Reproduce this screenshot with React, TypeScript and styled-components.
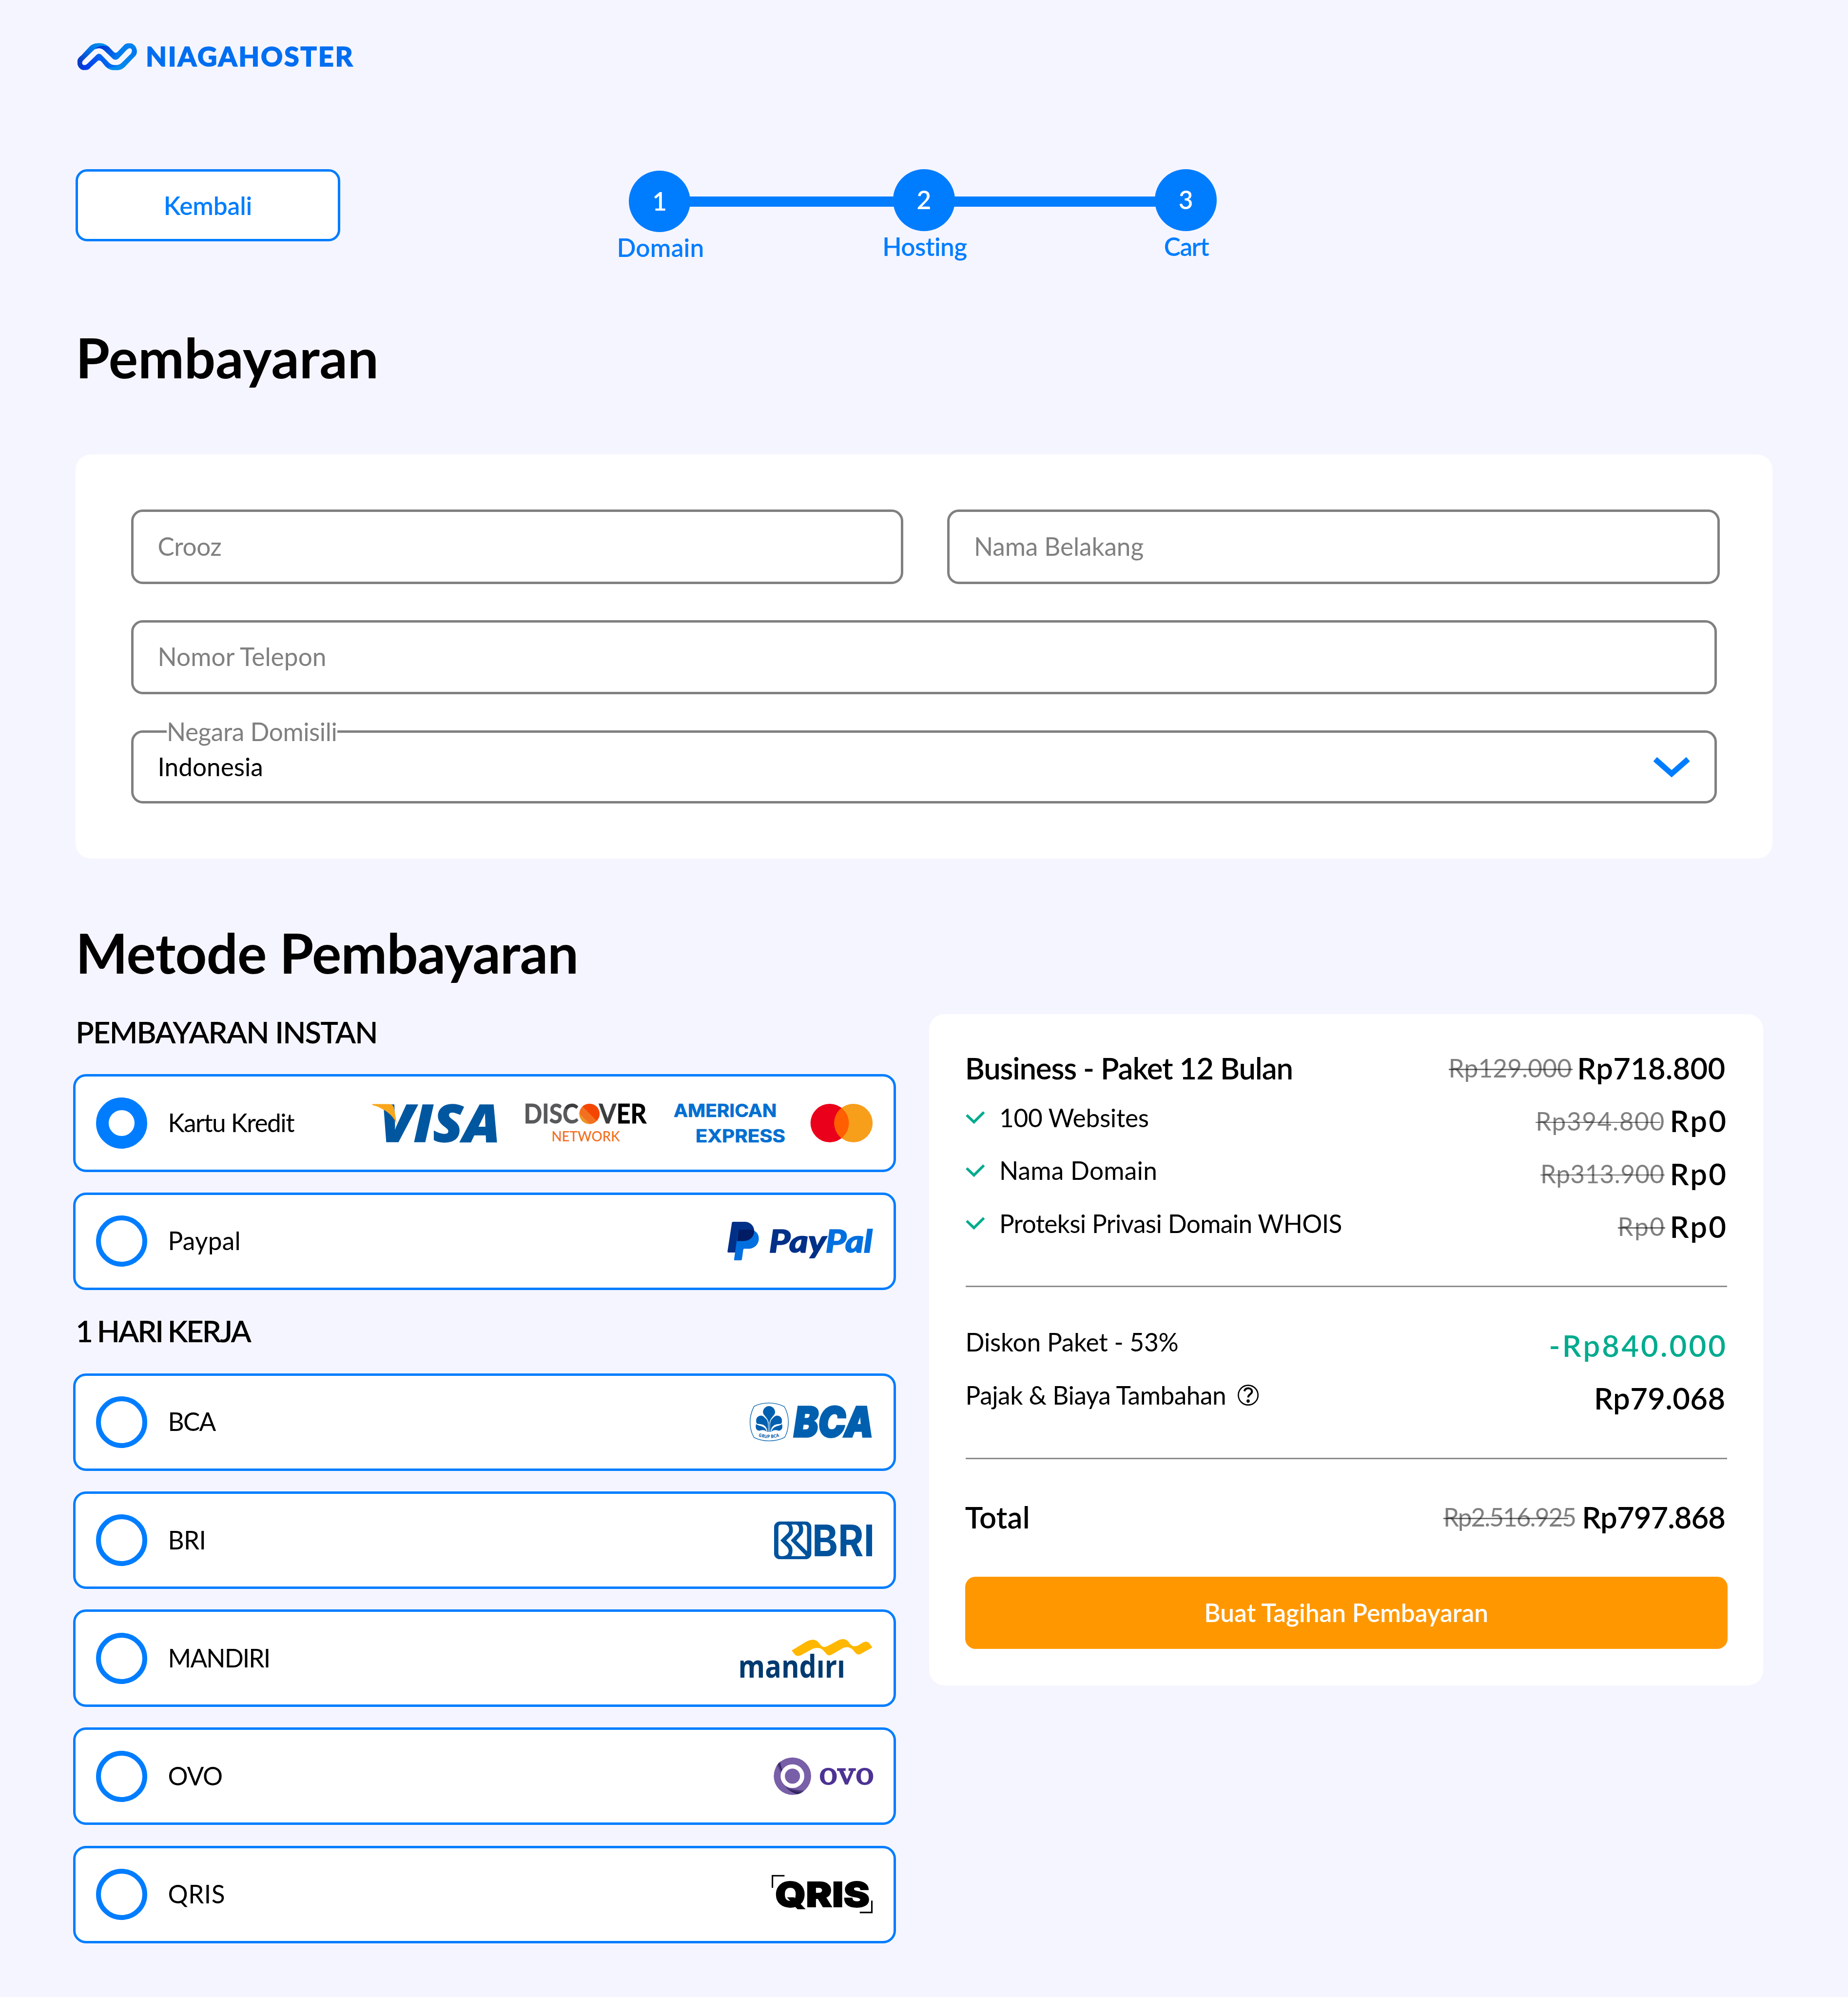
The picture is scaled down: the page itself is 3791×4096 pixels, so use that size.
import React from "react";
import styled, { createGlobalStyle } from "styled-components";

const u = (n: number) => `${+(n * 0.87755).toFixed(3)}px`;

const color = {
  page: "#f5f5ff",
  blue: "#007dff",
  grey: "#808080",
  green: "#00ab8e",
  orange: "#ff9800",
};

const GlobalStyle = createGlobalStyle`
  *, *::before, *::after { box-sizing: border-box; }
  html, body { margin: 0; padding: 0; background: ${color.page}; }
  body { font-family: Lato, "Open Sans", sans-serif; color: #000; }
  button, h1, h2, h3, ul { margin: 0; padding: 0; font: inherit; }
`;

/* ---------- type ---------- */

const Body = styled.span<{ $ls?: number; $medium?: boolean }>`
  font-size: ${u(58.5)};
  line-height: ${u(72)};
  font-weight: ${(p) => (p.$medium ? 600 : 400)};
  letter-spacing: ${(p) => u(p.$ls ?? 0)};
  margin-right: ${(p) => u(-(p.$ls ?? 0))};
  white-space: nowrap;
`;

const Strong = styled.span<{ $ls?: number; $inset?: number }>`
  font-size: ${u(70.2)};
  line-height: ${u(84)};
  font-weight: 600;
  letter-spacing: ${(p) => u(p.$ls ?? 0)};
  margin-right: ${(p) => u((p.$inset ?? 0) - (p.$ls ?? 0))};
  white-space: nowrap;
`;

const Title = styled.h1<{ $top: number; $ls: number }>`
  margin: ${(p) => u(p.$top)} 0 0 ${u(177)};
  font-size: ${u(128.7)};
  line-height: ${u(160)};
  font-weight: 700;
  letter-spacing: ${(p) => u(p.$ls)};
  white-space: nowrap;
`;

/* ---------- page frame ---------- */

const Page = styled.main`
  display: flex;
  flex-direction: column;
  width: ${u(4320)};
  height: 4096px;
  overflow: hidden;
  background: ${color.page};
`;

const Header = styled.header`
  display: flex;
  padding: ${u(97)} 0 0 ${u(177)};
`;

const Drawing = styled.svg<{ $w: number; $h: number }>`
  display: block;
  flex: none;
  width: ${(p) => u(p.$w)};
  height: ${(p) => u(p.$h)};
  overflow: visible;
`;

const Nav = styled.nav`
  display: flex;
  align-items: flex-start;
  height: ${u(240)};
  margin: ${u(229)} 0 0 ${u(177)};
`;

const BackButton = styled.button`
  display: flex;
  align-items: center;
  justify-content: center;
  width: ${u(618)};
  height: ${u(168)};
  border: ${u(6)} solid ${color.blue};
  border-radius: ${u(27)};
  background: #fff;
  color: ${color.blue};
`;

const Stepper = styled.div`
  display: flex;
  align-items: flex-start;
  margin-left: ${u(675)};
`;

const Step = styled.div<{ $drop?: boolean }>`
  display: flex;
  flex-direction: column;
  align-items: center;
  width: ${u(144)};
  padding-top: ${(p) => u(p.$drop ? 3 : 0)};
  color: ${color.blue};
`;

const StepDot = styled.div`
  display: flex;
  align-items: center;
  justify-content: center;
  width: ${u(144)};
  height: ${u(144)};
  padding-bottom: ${u(2)};
  border-radius: 50%;
  background: ${color.blue};
  color: #fff;
`;

const StepLabel = styled(Body)`
  padding-left: ${u(4)};
`;

const StepLine = styled.div<{ $w: number }>`
  width: ${(p) => u(p.$w)};
  height: ${u(24)};
  margin: ${u(63)} ${u(-2)} 0;
  background: ${color.blue};
`;

/* ---------- form ---------- */

const FormCard = styled.section`
  display: flex;
  flex-direction: column;
  gap: ${u(84)};
  width: ${u(3966)};
  height: ${u(945)};
  margin: ${u(147)} 0 0 ${u(177)};
  padding: ${u(129)} ${u(123)} 0 ${u(129)};
  border-radius: ${u(36)};
  background: #fff;
`;

const FieldRow = styled.div`
  display: flex;
  justify-content: space-between;
`;

const Field = styled.div<{ $w: number; $h?: number }>`
  position: relative;
  display: flex;
  align-items: center;
  justify-content: space-between;
  width: ${(p) => u(p.$w)};
  height: ${(p) => u(p.$h ?? 174)};
  padding: 0 ${u(57)} ${u(2)};
  border: ${u(6)} solid ${color.grey};
  border-radius: ${u(27)};
  color: ${color.grey};
`;

const FieldLegend = styled.label`
  position: absolute;
  left: ${u(78)};
  top: ${u(-39)};
  width: ${u(399)};
  height: ${u(72)};
  background: #fff;
`;

const FieldValue = styled(Body)`
  margin-top: ${u(1)};
  color: #000;
`;

/* ---------- payment methods ---------- */

const Columns = styled.div`
  display: flex;
  align-items: flex-start;
  gap: ${u(78)};
  margin: ${u(63)} 0 0 ${u(171)};
`;

const Methods = styled.div`
  display: flex;
  flex-direction: column;
  gap: ${u(54)};
  width: ${u(1923)};
`;

const MethodGroup = styled.section`
  display: flex;
  flex-direction: column;
  gap: ${u(48)};
`;

const GroupLabel = styled.h3<{ $ls: number; $ws?: number }>`
  margin: 0 0 ${u(9)} ${u(6)};
  font-size: ${u(70.2)};
  line-height: ${u(84)};
  font-weight: 600;
  letter-spacing: ${(p) => u(p.$ls)};
  word-spacing: ${(p) => u(p.$ws ?? 0)};
`;

const Method = styled.div`
  display: flex;
  align-items: center;
  height: ${u(228)};
  padding: 0 ${u(48)};
  border: ${u(6)} solid ${color.blue};
  border-radius: ${u(30)};
  background: #fff;
`;

const Radio = styled.div<{ $on?: boolean }>`
  flex: none;
  width: ${u(120)};
  height: ${u(120)};
  margin-right: ${u(48)};
  border: ${(p) => u(p.$on ? 30 : 12)} solid ${color.blue};
  border-radius: 50%;
  background: #fff;
`;

const MethodName = styled(Body)`
  padding-bottom: ${u(2)};
`;

const Brands = styled.div`
  display: flex;
  align-items: center;
  gap: ${u(63)};
  margin-left: auto;
`;

/* ---------- summary ---------- */

const Summary = styled.aside`
  width: ${u(1950)};
  height: ${u(1569)};
  padding: ${u(65)} ${u(84)} 0;
  border-radius: ${u(36)};
  background: #fff;
`;

const Line = styled.div`
  display: flex;
  align-items: center;
  justify-content: space-between;
  height: ${u(123.4)};
`;

const LineLabel = styled.div<{ $gap?: number }>`
  display: flex;
  align-items: center;
  gap: ${(p) => u(p.$gap ?? 0)};
  padding: 0 0 ${u(15)} ${u(1)};
`;

const Prices = styled.div`
  display: flex;
  align-items: center;
  gap: ${u(13)};
`;

const OldPrice = styled(Body)<{ $strike: number }>`
  position: relative;
  color: ${color.grey};

  &::after {
    content: "";
    position: absolute;
    left: 0;
    top: ${u(37.5)};
    width: ${(p) => u(p.$strike)};
    height: ${u(3)};
    background: rgba(0, 0, 0, 0.55);
  }
`;

const Divider = styled.hr<{ $top: number; $bottom: number }>`
  height: ${u(3.42)};
  margin: ${(p) => u(p.$top)} ${u(1)} ${(p) => u(p.$bottom)};
  border: 0;
  background: #8c8c8c;
`;

const PayButton = styled.button`
  display: flex;
  align-items: center;
  justify-content: center;
  width: 100%;
  height: ${u(168)};
  margin-top: ${u(78)};
  padding: 0;
  border: 0;
  border-radius: ${u(24)};
  background: ${color.orange};
  color: #fff;
`;

/* ---------- logos ---------- */

const Mark = styled.text<{ $font?: string; $weight: number; $italic?: boolean; $bold?: number }>`
  font-family: ${(p) => p.$font ?? "Lato"}, sans-serif;
  font-weight: ${(p) => p.$weight};
  font-style: ${(p) => (p.$italic ? "italic" : "normal")};
  stroke: ${(p) => (p.$bold ? p.fill ?? "#000" : "none")};
  stroke-width: ${(p) => p.$bold ?? 0};
`;

const NiagahosterLogo = () => (
  <Drawing $w={655} $h={70} viewBox="177 97 655 70">
    <defs>
      <linearGradient id="nhBase" x1="68" y1="260" x2="371" y2="120" gradientUnits="userSpaceOnUse">
        <stop offset="0" stopColor="#0030e6" />
        <stop offset=".3" stopColor="#0052f0" />
        <stop offset=".6" stopColor="#0078ee" />
        <stop offset="1" stopColor="#0084f0" />
      </linearGradient>
      <linearGradient id="nhTop" x1="80" y1="215" x2="205" y2="95" gradientUnits="userSpaceOnUse">
        <stop offset="0" stopColor="#0a3cc8" />
        <stop offset=".5" stopColor="#0074e6" />
        <stop offset="1" stopColor="#0096ec" />
      </linearGradient>
      <linearGradient id="nhMid" x1="165" y1="115" x2="262" y2="190" gradientUnits="userSpaceOnUse">
        <stop offset="0" stopColor="#002fd0" />
        <stop offset="1" stopColor="#0072ee" />
      </linearGradient>
      <linearGradient id="nhEnd" x1="240" y1="282" x2="371" y2="150" gradientUnits="userSpaceOnUse">
        <stop offset="0" stopColor="#0090ec" />
        <stop offset="1" stopColor="#0078f0" />
      </linearGradient>
      <clipPath id="nhClip">
        <path
          clipRule="evenodd"
          d="M68 228C68 205 76 192 88 180L130 118C142 100 160 93 178 93C197 93 215 102 227 118L252 154C258 163 267 163 273 154L302 112C310 98 320 93 332 93C355 93 371 120 371 150C371 170 364 182 355 193L310 258C298 275 285 282 265 282L250 282C234 281 222 270 212 258L190 222C183 212 174 212 168 222L136 262C128 276 120 282 108 282L98 282C82 278 68 255 68 228ZM92 232C92 240 97 247 104 247C110 247 114 244 120 236L162 180C172 163 184 163 194 180L231 232C238 241 248 247 262 247C278 247 286 242 295 230L333 178C338 172 342 166 344 158C348 140 345 130 335 129C330 129 324 134 318 142L279 198C270 213 254 213 245 198L206 146C199 136 190 129 178 129C166 129 156 134 148 146L103 206C97 214 92 222 92 232Z"
        />
      </clipPath>
    </defs>
    <g transform="translate(150 70) scale(.45914 .33333)">
      <g clipPath="url(#nhClip)">
        <path d="M60 85H380V290H60Z" fill="url(#nhBase)" />
        <path d="M60 290V85H235V128C205 105 170 108 150 142L92 225C88 250 92 268 104 290Z" fill="url(#nhTop)" />
        <path d="M160 130C180 108 205 108 228 118L262 165L262 212L205 150Z" fill="url(#nhMid)" />
        <path d="M224 264C250 266 270 258 285 240L345 160C350 140 345 125 335 122C355 120 368 135 375 150V290H230Z" fill="url(#nhEnd)" />
      </g>
    </g>
    <Mark $weight={900} $bold={1.6} x="341" y="155" fontSize="63.5" fill="#006ef0" textLength="484" lengthAdjust="spacing">
      NIAGAHOSTER
    </Mark>
  </Drawing>
);

const VisaLogo = () => (
  <Drawing $w={294} $h={90} viewBox="870 2580 294 90">
    <Mark $font="'Open Sans'" $weight={800} $italic $bold={1.5} x="887" y="2668.5" fontSize="121" fill="#0057a0" textLength="282" lengthAdjust="spacingAndGlyphs">
      VISA
    </Mark>
    <g transform="translate(840 2540) scale(.45914 .33333)">
      <path d="M65 122H152C165 124 173 133 175 150L190 265C180 225 150 180 120 160C105 146 85 134 65 129Z" fill="#faa61a" />
    </g>
  </Drawing>
);

const DiscoverLogo = () => (
  <Drawing $w={285} $h={90} viewBox="1227 2580 285 90">
    <defs>
      <linearGradient id="dcL" x1="0" y1="1" x2="1" y2="0">
        <stop offset=".7" stopColor="#58595b" />
        <stop offset=".7" stopColor="#3c3d3f" />
      </linearGradient>
      <linearGradient id="dcR" x1="0" y1="0" x2="1" y2="0">
        <stop offset=".42" stopColor="#3c3d3f" />
        <stop offset=".42" stopColor="#000" />
      </linearGradient>
      <linearGradient id="dcO" x1="0" y1=".8" x2=".8" y2="0">
        <stop offset=".2" stopColor="#ec9426" />
        <stop offset=".2" stopColor="#f37021" />
        <stop offset=".52" stopColor="#f37021" />
        <stop offset=".52" stopColor="#f44600" />
      </linearGradient>
    </defs>
    <Mark $weight={700} $bold={1} x="1224" y="2626" fontSize="63" fill="url(#dcL)" textLength="128" lengthAdjust="spacingAndGlyphs">
      DISC
    </Mark>
    <circle cx="1377.7" cy="2603.5" r="23.8" fill="url(#dcO)" />
    <Mark $weight={700} $bold={1} x="1400" y="2626" fontSize="63" fill="url(#dcR)" textLength="111" lengthAdjust="spacingAndGlyphs">
      VER
    </Mark>
    <Mark $weight={500} x="1289" y="2667.5" fontSize="33.5" fill="#f37021" textLength="160" lengthAdjust="spacingAndGlyphs">
      NETWORK
    </Mark>
  </Drawing>
);

const AmexLogo = () => (
  <Drawing $w={257} $h={90} viewBox="1575 2580 257 90">
    <Mark $font="Inter" $weight={700} $bold={0.8} x="1575" y="2610.3" fontSize="41.5" fill="#006fd1" textLength="241" lengthAdjust="spacingAndGlyphs">
      AMERICAN
    </Mark>
    <Mark $font="Inter" $weight={700} $bold={0.8} x="1626" y="2669.7" fontSize="41.5" fill="#006fd1" textLength="210" lengthAdjust="spacingAndGlyphs">
      EXPRESS
    </Mark>
  </Drawing>
);

const MastercardLogo = () => (
  <Drawing $w={145} $h={90} viewBox="1895 2580 145 90">
    <defs>
      <clipPath id="mcClip">
        <circle cx="1939.5" cy="2625" r="44.9" />
      </clipPath>
    </defs>
    <circle cx="1939.5" cy="2625" r="44.9" fill="#eb001b" />
    <circle cx="1995" cy="2625" r="44.9" fill="#f79e1b" />
    <circle cx="1995" cy="2625" r="44.9" fill="#ff5f00" clipPath="url(#mcClip)" />
  </Drawing>
);

const PaypalLogo = () => (
  <Drawing $w={340} $h={90} viewBox="1700 2856 340 90">
    <g transform="translate(1500 2540) scale(.39541 .33333)">
      <path transform="translate(0 0)" d="M539 948H612C643 950 665 980 665 1012C665 1050 640 1083 602 1083H563L553 1163H511Q506 1163 507 1155L533 954Q534 948 539 948Z" fill="#003087" />
      <path d="M576 1002H650Q660 1004 666 1011C682 1020 692 1042 692 1065C692 1110 662 1137 632 1137H606Q601 1137 600 1145L592 1212Q591 1218 586 1218H549Q545 1218 546 1210L570 1008Q571 1002 576 1002Z" fill="#0070e0" />
      <path d="M576 1002H650Q660 1004 665 1011C665 1050 640 1083 602 1083H563L571 1008Q572 1002 576 1002Z" fill="#001c64" />
    </g>
    <Mark $weight={900} $italic $bold={1.8} x="1797.5" y="2927.5" fontSize="74" fill="#003087" textLength="134" lengthAdjust="spacingAndGlyphs">
      Pay
    </Mark>
    <Mark $weight={900} $italic $bold={1.8} x="1929.5" y="2927.5" fontSize="74" fill="#0070e0" textLength="110" lengthAdjust="spacingAndGlyphs">
      Pal
    </Mark>
  </Drawing>
);

const BcaLogo = () => (
  <Drawing $w={288} $h={90} viewBox="1752 3279 288 90">
    <g transform="translate(1700 3240) scale(.33333)" fill="#0060af">
      <path
        d="M186 143C220 125 255 119 291 119C327 119 365 127 399 145C418 180 427 215 427 252C427 290 418 330 401 360C365 378 330 385 291 385C255 385 220 378 186 361C168 330 158 290 158 252C158 215 168 180 186 143Z"
        fill="none"
        stroke="#0060af"
        strokeWidth="4.5"
      />
      <path d="M249 184C249 160 268 141 291 141C315 141 334 160 334 184C334 206 303 218 295 255L294 322H289L288 255C281 218 249 206 249 184Z" />
      <path id="bcaPetal" d="M204 262C196 240 202 209 236 208C255 210 259 222 270 230C281 240 285 255 285 290V322H280C278 290 262 275 240 269C222 265 212 267 204 262Z" />
      <path id="bcaLeaf" d="M201 267C196 285 195 312 224 314C245 308 262 306 275 322C272 298 254 286 232 280C215 276 206 273 201 267Z" />
      <use href="#bcaPetal" transform="translate(583 0) scale(-1 1)" />
      <use href="#bcaLeaf" transform="translate(583 0) scale(-1 1)" />
      <path id="bcaArc" d="M217 354Q291 376 368 354" fill="none" />
      <Mark $font="'Open Sans'" $weight={700} fontSize="32">
        <textPath href="#bcaArc" textLength="148" lengthAdjust="spacingAndGlyphs">
          GRUP BCA
        </textPath>
      </Mark>
    </g>
    <Mark $font="Inter" $weight={900} $italic $bold={4} x="1855" y="3358.5" fontSize="97" fill="#0060af" textLength="186" lengthAdjust="spacingAndGlyphs">
      BCA
    </Mark>
  </Drawing>
);

const BriLogo = () => (
  <Drawing $w={231} $h={90} viewBox="1809 3555 231 90">
    <g transform="translate(1700 3240) scale(.33333)">
      <rect x="327" y="948" width="261" height="264" rx="40" fill="#00529c" />
      <path d="M357 990Q357 969 378 969H400C425 970 432 990 432 1005C432 1018 427 1025 420 1032L371 1080L415 1124C425 1135 429 1145 429 1155C428 1178 410 1190 385 1190H377Q357 1190 357 1170Z" fill="#fff" />
      <path d="M449 969H475C495 970 502 985 502 1003C502 1018 497 1025 490 1032L444 1080L548 1186L545 1190H447C453 1178 456 1165 456 1150C456 1130 450 1118 442 1110L412 1080L448 1044C456 1035 459 1022 459 1010C459 990 454 978 449 969Z" fill="#fff" />
      <path d="M522 969H537Q558 972 558 992V1156L483 1081L515 1046C526 1035 531 1022 531 1005C531 985 527 975 522 969Z" fill="#fff" />
    </g>
    <Mark $font="Inter" $weight={700} x="1898" y="3636.7" fontSize="101.5" fill="#00529c" textLength="146" lengthAdjust="spacingAndGlyphs">
      BRI
    </Mark>
  </Drawing>
);

const MandiriLogo = () => (
  <Drawing $w={309} $h={90} viewBox="1731 3831 309 90">
    <g transform="translate(1700 3780) scale(.33333 .48469)">
      <path
        d="M452 160L560 115C600 103 625 107 645 125C662 141 675 147 700 140L775 112C810 100 838 105 855 122C872 138 885 143 915 137L950 122C975 114 990 118 1000 128L1018 145L940 175C920 182 910 180 895 168C870 146 850 140 815 147L745 175C715 187 705 187 688 170C665 150 645 143 605 150L525 180C500 190 480 187 470 176Z"
        fill="#ffb700"
      />
    </g>
    <Mark $font="'Open Sans'" $weight={700} x="1726" y="3920.6" fontSize="73" fill="#003a70" textLength="250" lengthAdjust="spacingAndGlyphs">
      mandırı
    </Mark>
  </Drawing>
);

const OvoLogo = () => (
  <Drawing $w={232} $h={90} viewBox="1808 4107 232 90">
    <defs>
      <linearGradient id="ovoA" x1="1826" y1="4120" x2="1814" y2="4126" gradientUnits="userSpaceOnUse">
        <stop offset="0" stopColor="#785fa8" />
        <stop offset=".45" stopColor="#2f2260" />
        <stop offset="1" stopColor="#785fa8" />
      </linearGradient>
      <linearGradient id="ovoB" x1="1862" y1="4178" x2="1858" y2="4196" gradientUnits="userSpaceOnUse">
        <stop offset="0" stopColor="#785fa8" />
        <stop offset=".65" stopColor="#2a1e5a" />
        <stop offset="1" stopColor="#4a3880" />
      </linearGradient>
    </defs>
    <circle cx="1852" cy="4151.5" r="43.7" fill="#785fa8" />
    <path d="M1813 4131C1816 4125 1820 4119 1826 4116C1824 4126 1826 4134 1830 4138L1825 4152C1818 4146 1813 4140 1813 4131Z" fill="url(#ovoA)" />
    <path d="M1834 4174C1846 4182 1862 4184 1880 4185C1875 4190 1870 4192 1864 4194C1852 4190 1840 4184 1834 4174Z" fill="url(#ovoB)" />
    <circle cx="1852" cy="4151.5" r="22.7" fill="#785fa8" stroke="#fff" strokeWidth="10" />
    <Mark $font="'DejaVu Serif'" $weight={400} $bold={2.6} x="1914" y="4169.5" fontSize="69" fill="#4d3394" textLength="129" lengthAdjust="spacingAndGlyphs">
      ovo
    </Mark>
  </Drawing>
);

const QrisLogo = () => (
  <Drawing $w={236} $h={90} viewBox="1804 4383 236 90">
    <path d="M1834 4384.5H1805.8V4412.5M2010 4470.3H2038.2V4442.5" fill="none" stroke="#000" strokeWidth="3.5" />
    <Mark $font="Inter" $weight={900} $bold={2} x="1812" y="4456.8" fontSize="80.5" textLength="221" lengthAdjust="spacingAndGlyphs">
      QRIS
    </Mark>
  </Drawing>
);

/* ---------- icons ---------- */

const Chevron = () => (
  <Drawing $w={87} $h={49} viewBox="0 -1 87 49">
    <path d="M5 6L43.5 40L82 6" fill="none" stroke={color.blue} strokeWidth="13" />
  </Drawing>
);

const Check = () => (
  <Drawing $w={45} $h={30} viewBox="0 0 45 30">
    <path d="M2.3 9.3L19.3 25.6L42.7 2.4" fill="none" stroke={color.green} strokeWidth="6.2" />
  </Drawing>
);

const Help = () => (
  <Drawing $w={49} $h={49} viewBox="0 0 49 49">
    <circle cx="24.5" cy="24.5" r="23" fill="none" stroke="#000" strokeWidth="3" />
    <path d="M15.6 15.4C17 10.6 20.6 8.4 25 8.6C30 8.8 33.4 11.8 33.4 16.2C33.4 22.6 24.6 22.4 24.6 30" fill="none" stroke="#000" strokeWidth="4.6" />
    <circle cx="24.4" cy="38.4" r="3.8" />
  </Drawing>
);

/* ---------- data ---------- */

const instant = [
  { name: "Kartu Kredit", ls: -1.7, on: true, logos: [VisaLogo, DiscoverLogo, AmexLogo, MastercardLogo] },
  { name: "Paypal", ls: 0.3, logos: [PaypalLogo] },
];

const oneDay = [
  { name: "BCA", ls: -2, logos: [BcaLogo] },
  { name: "BRI", ls: -0.8, logos: [BriLogo] },
  { name: "MANDIRI", ls: -2.1, logos: [MandiriLogo] },
  { name: "OVO", ls: -1.4, logos: [OvoLogo] },
  { name: "QRIS", ls: 0.6, logos: [QrisLogo] },
];

const features = [
  { name: "100 Websites", ls: -0.3, old: "Rp394.800", oldLs: 1.8, strike: 291 },
  { name: "Nama Domain", ls: 0.3, old: "Rp313.900", oldLs: 0.4, strike: 291 },
  { name: "Proteksi Privasi Domain WHOIS", ls: -0.7, old: "Rp0", oldLs: 3, strike: 111 },
];

type MethodItem = { name: string; ls: number; on?: boolean; logos: React.ComponentType[] };

const MethodRow = ({ item }: { item: MethodItem }) => (
  <Method>
    <Radio $on={item.on} />
    <MethodName $ls={item.ls}>{item.name}</MethodName>
    <Brands>
      {item.logos.map((Logo, i) => (
        <Logo key={i} />
      ))}
    </Brands>
  </Method>
);

const DiscountPrice = styled(Strong)`
  color: ${color.green};
`;

export default function App() {
  return (
    <Page>
      <GlobalStyle />
      <Header>
        <NiagahosterLogo />
      </Header>

      <Nav>
        <BackButton>
          <Body $medium $ls={-0.2}>Kembali</Body>
        </BackButton>
        <Stepper>
          <Step $drop>
            <StepDot><Body $medium>1</Body></StepDot>
            <StepLabel $medium $ls={0.2}>Domain</StepLabel>
          </Step>
          <StepLine $w={478} />
          <Step>
            <StepDot><Body $medium>2</Body></StepDot>
            <StepLabel $medium $ls={-0.7}>Hosting</StepLabel>
          </Step>
          <StepLine $w={472} />
          <Step>
            <StepDot><Body $medium>3</Body></StepDot>
            <StepLabel $medium $ls={-1.8}>Cart</StepLabel>
          </Step>
        </Stepper>
      </Nav>

      <Title $top={119} $ls={0.2}>Pembayaran</Title>

      <FormCard>
        <FieldRow>
          <Field $w={1806}><Body $ls={-0.4}>Crooz</Body></Field>
          <Field $w={1806}><Body $ls={-0.1}>Nama Belakang</Body></Field>
        </FieldRow>
        <Field $w={3708}><Body $ls={0.1}>Nomor Telepon</Body></Field>
        <Field $w={3708} $h={171}>
          <FieldLegend><Body $ls={-0.5}>Negara Domisili</Body></FieldLegend>
          <FieldValue $ls={0}>Indonesia</FieldValue>
          <Chevron />
        </Field>
      </FormCard>

      <Title as="h2" $top={140} $ls={-0.8}>Metode Pembayaran</Title>

      <Columns>
        <Methods>
          <MethodGroup>
            <GroupLabel $ls={-2.1}>PEMBAYARAN INSTAN</GroupLabel>
            {instant.map((m) => <MethodRow key={m.name} item={m} />)}
          </MethodGroup>
          <MethodGroup>
            <GroupLabel $ls={-3.4} $ws={-2}>1 HARI KERJA</GroupLabel>
            {oneDay.map((m) => <MethodRow key={m.name} item={m} />)}
          </MethodGroup>
        </Methods>

        <Summary>
          <Line>
            <Strong $ls={-1.3}>Business - Paket 12 Bulan</Strong>
            <Prices>
              <OldPrice $ls={0.15} $strike={290}>Rp129.000</OldPrice>
              <Strong $ls={0.2} $inset={5}>Rp718.800</Strong>
            </Prices>
          </Line>
          {features.map((f) => (
            <Line key={f.name}>
              <LineLabel $gap={34}>
                <Check />
                <Body $ls={f.ls}>{f.name}</Body>
              </LineLabel>
              <Prices>
                <OldPrice $ls={f.oldLs} $strike={f.strike}>{f.old}</OldPrice>
                <Strong $ls={3.5} $inset={3}>Rp0</Strong>
              </Prices>
            </Line>
          ))}
          <Divider $top={76} $bottom={75} />
          <Line>
            <LineLabel><Body $ls={-0.2}>Diskon Paket - 53%</Body></LineLabel>
            <DiscountPrice $ls={4.7} $inset={4}>-Rp840.000</DiscountPrice>
          </Line>
          <Line>
            <LineLabel $gap={26}>
              <Body $ls={-0.5}>Pajak &amp; Biaya Tambahan</Body>
              <Help />
            </LineLabel>
            <Strong $ls={0.4} $inset={5}>Rp79.068</Strong>
          </Line>
          <Divider $top={77} $bottom={74} />
          <Line>
            <Strong $ls={0.2}>Total</Strong>
            <Prices>
              <OldPrice $ls={-2.3} $strike={292}>Rp2.516.925</OldPrice>
              <Strong $ls={-1.1} $inset={4}>Rp797.868</Strong>
            </Prices>
          </Line>
          <PayButton>
            <Body $medium $ls={0}>Buat Tagihan Pembayaran</Body>
          </PayButton>
        </Summary>
      </Columns>
    </Page>
  );
}
